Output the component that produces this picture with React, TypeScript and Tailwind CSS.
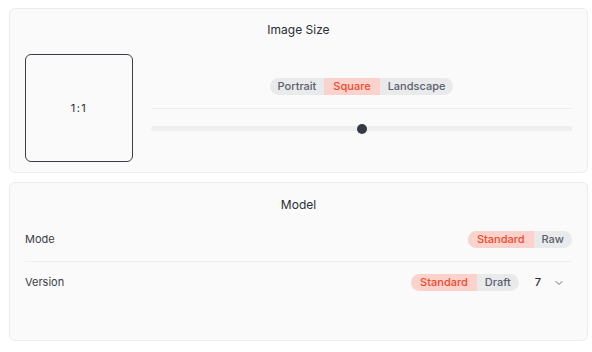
import { ChevronDown } from "lucide-react";

type Seg = { label: string; active?: boolean };

function Segmented({ items }: { items: Seg[] }) {
  return (
    <div className="flex h-[17px] overflow-hidden rounded-full bg-[#e9eaec] text-[11px] font-medium leading-[17px]">
      {items.map((it) => (
        <div
          key={it.label}
          className={
            it.active
              ? "bg-[#fbd3cc] px-[9px] text-[#f2482d]"
              : "px-[8px] text-[#5b5f6b]"
          }
        >
          {it.label}
        </div>
      ))}
    </div>
  );
}

export default function App() {
  return (
    <div
      className="h-[352px] w-[592px] bg-white pt-[8px] text-[#2b2d33]"
      style={{ fontFamily: "Inter, 'Noto Sans', sans-serif" }}
    >
      <div className="ml-[9px] w-[579px] rounded-md border border-[#ececee] bg-[#fafafa] px-[15px] pb-[10px] pt-[13px]">
        <div className="text-center text-[12px] leading-[16px] text-[#2b2d33]">Image Size</div>
        <div className="mt-[16px] flex items-start gap-[18px]">
          <div className="flex h-[108px] w-[108px] shrink-0 items-center justify-center rounded-md border border-[#3b3e46] text-[11px] tracking-[1.5px] text-[#2b2d33]">
            1:1
          </div>
          <div className="mt-[24px] flex flex-1 flex-col items-center">
            <Segmented
              items={[{ label: "Portrait" }, { label: "Square", active: true }, { label: "Landscape" }]}
            />
            <div className="mt-[13px] h-px w-full bg-[#eeeef0]" />
            <div className="relative mt-[17px] h-[5px] w-full rounded-full bg-[#efeff1]">
              <div className="absolute left-1/2 top-1/2 h-[10px] w-[10px] -translate-x-1/2 -translate-y-1/2 rounded-full bg-[#363a44]" />
            </div>
          </div>
        </div>
      </div>

      <div className="ml-[9px] mt-[9px] h-[159px] w-[579px] rounded-md border border-[#ececee] bg-[#fafafa] px-[15px] pt-[14px]">
        <div className="text-center text-[12px] leading-[16px] text-[#2b2d33]">Model</div>
        <div className="mt-[18px] flex items-center justify-between">
          <span className="text-[11px] text-[#3a3d45]">Mode</span>
          <Segmented items={[{ label: "Standard", active: true }, { label: "Raw" }]} />
        </div>
        <div className="mt-[13px] h-px w-full bg-[#eeeef0]" />
        <div className="mt-[12px] flex items-center justify-between">
          <span className="text-[11px] text-[#3a3d45]">Version</span>
          <div className="flex items-center">
            <Segmented items={[{ label: "Standard", active: true }, { label: "Draft" }]} />
            <span className="ml-[16px] text-[11px] font-medium text-[#2b2d33]">7</span>
            <ChevronDown className="ml-[12px] mr-[7px] h-[12px] w-[12px] text-[#6b6f7a]" strokeWidth={2} />
          </div>
        </div>
      </div>
    </div>
  );
}
